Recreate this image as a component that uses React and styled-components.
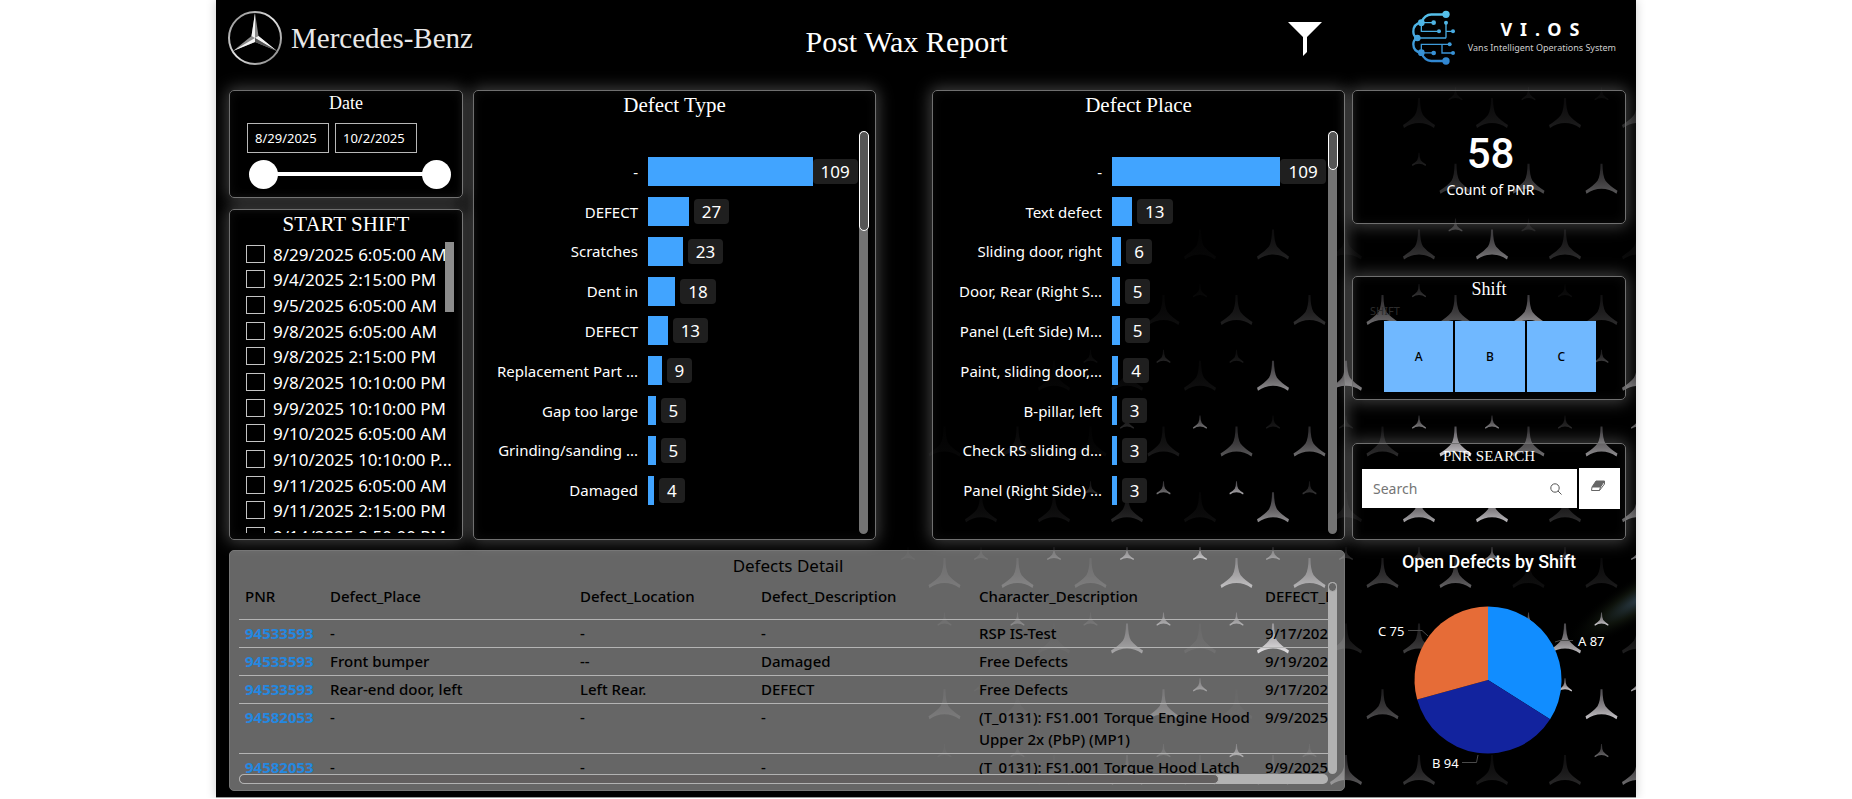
import React, { useState } from "react";
import styled, { createGlobalStyle } from "styled-components";

const GlobalStyle = createGlobalStyle`
  :root {
    --sans: "Noto Sans", "Open Sans", sans-serif;
    --serif: "Liberation Serif", "Times New Roman", serif;
    --din: Roboto, "Noto Sans", sans-serif;
    --color-bar: #41a4ff;
    --color-line: #707070;
  }
  * {
    box-sizing: border-box;
  }
  body {
    margin: 0;
    background-color: #fff;
    font-family: var(--sans);
    color: #fff;
  }
  button,
  input {
    font-family: inherit;
  }
`;

const Board = styled.main`
  position: relative;
  isolation: isolate;
  width: 100%;
  max-width: 1420px;
  margin: 0 auto;
  padding: 0 10px 6px 13px;
  background-color: #000;
  border-bottom: 1px solid #999;
  box-shadow: 0 0 10px rgba(0, 0, 0, 0.2);
`;

const Backdrop = styled.svg`
  position: absolute;
  inset: 0;
  z-index: -1;
  width: 100%;
  height: 100%;
`;

const Header = styled.header`
  height: 90px;
  padding-bottom: 10px;
  margin-left: -2px;
  display: grid;
  grid-template-columns: 1fr auto 1fr;
  align-items: center;
`;

const Brand = styled.div`
  display: flex;
  align-items: center;
  gap: 8px;
  padding-bottom: 4px;
  font-family: var(--serif);
  font-size: 29px;
  color: #e8e8e8;
`;

const PageTitle = styled.h1`
  margin: 0;
  padding: 4px 40px 0 0;
  font-family: var(--serif);
  font-size: 30px;
  font-weight: 400;
`;

const HeaderTools = styled.div`
  display: flex;
  align-items: center;
  justify-content: flex-end;
  gap: 88px;
  padding: 0 10px 6px 0;
`;

const FilterButton = styled.button`
  display: flex;
  padding: 4px 0 0;
  border: none;
  background: none;
  cursor: pointer;
`;

const Product = styled.div`
  display: flex;
  align-items: center;
  gap: 12px;
`;

const ProductName = styled.div`
  display: flex;
  flex-direction: column;
  align-items: center;
  strong {
    font-size: 18px;
    line-height: 22px;
    letter-spacing: 8px;
    margin-left: 4px;
  }
  span {
    font-size: 9px;
    line-height: 16px;
    white-space: nowrap;
    color: #ccc;
  }
`;

const Content = styled.div`
  display: grid;
  grid-template-columns: minmax(0, 1116fr) minmax(0, 274fr);
  gap: 7px;
`;

const MainArea = styled.div`
  display: flex;
  flex-direction: column;
  gap: 10px;
`;

const TopRow = styled.div`
  height: 450px;
  display: grid;
  grid-template-columns: minmax(0, 234fr) minmax(0, 449fr) minmax(0, 413fr);
  gap: 10px;
`;

const SideColumn = styled.div`
  display: flex;
  flex-direction: column;
  gap: 11px;
`;

const ChartCell = styled.div`
  display: flex;
  padding-right: ${(props) => (props.$spaced ? "46px" : "0")};
`;

const Card = styled.section`
  display: flex;
  flex-direction: column;
  width: 100%;
  height: ${(props) => props.$height || "auto"};
  flex: ${(props) => (props.$height ? "none" : "1")};
  min-height: 0;
  border: 1px solid var(--color-line);
  border-radius: 5px;
  box-shadow: 0 0 16px 2px rgba(255, 255, 255, 0.26), inset 0 0 12px rgba(255, 255, 255, 0.05);
`;

const CardTitle = styled.h2`
  margin: 0;
  flex: none;
  text-align: center;
  font-family: var(--serif);
  font-size: ${(props) => props.$size || "18px"};
  line-height: ${(props) => props.$line || "24px"};
  font-weight: 400;
`;

const DateFields = styled.div`
  display: flex;
  gap: 6px;
  padding: 8px 17px 0;
`;

const DateInput = styled.input`
  width: 82px;
  height: 30px;
  padding: 0 7px;
  border: 1px solid #b8b8b8;
  background: transparent;
  color: #fff;
  font-size: 13px;
`;

const RangeSlider = styled.div`
  position: relative;
  height: 30px;
  margin: 6px 11px 0 19px;
  ::before {
    content: "";
    position: absolute;
    inset: 13px 14px;
    background-color: #fff;
  }
`;

const RangeThumb = styled.input`
  position: absolute;
  inset: 0;
  width: 100%;
  height: 30px;
  margin: 0;
  appearance: none;
  background: transparent;
  pointer-events: none;
  &::-webkit-slider-thumb {
    appearance: none;
    width: 29px;
    height: 29px;
    border-radius: 50%;
    background: #fff;
    pointer-events: auto;
  }
`;

const CheckViewport = styled.div`
  position: relative;
  height: 291px;
  margin: 4px 8px 0 16px;
  overflow: hidden;
`;

const CheckList = styled.ul`
  height: 308px;
  margin: 0;
  padding: 0;
  list-style: none;
  display: grid;
  grid-auto-rows: 1fr;
`;

const CheckRow = styled.label`
  display: flex;
  align-items: center;
  gap: 8px;
  height: 100%;
  font-size: 17px;
  line-height: 24px;
  white-space: nowrap;
`;

const CheckBox = styled.input`
  appearance: none;
  flex: none;
  width: 19px;
  height: 18px;
  margin: 0 0 2px;
  border: 1px solid #c4c4c4;
  &:checked {
    background-color: var(--color-bar);
  }
`;

const CheckScroll = styled.div`
  position: absolute;
  top: 0;
  right: 0;
  width: 9px;
  height: 70px;
  background-color: #8c8c8c;
`;

const ChartBody = styled.div`
  display: flex;
  flex: 1;
  padding: 12px 7px 5px 0;
  min-height: 0;
`;

const ChartRows = styled.div`
  flex: 1;
  height: 358px;
  margin-top: 21px;
  display: grid;
  grid-auto-rows: 1fr;
`;

const ChartRow = styled.div`
  display: grid;
  grid-template-columns: ${(props) => props.$label} 1fr;
  gap: 10px;
  align-items: center;
`;

const ChartLabel = styled.span`
  text-align: right;
  font-size: 15px;
  line-height: 22px;
  white-space: nowrap;
`;

const Plot = styled.div`
  display: flex;
  align-items: center;
`;

const Bar = styled.div`
  flex: none;
  height: 29px;
  background-color: var(--color-bar);
`;

const BarValue = styled.span`
  margin-left: ${(props) => (props.$tight ? "0" : "5px")};
  padding: 0 8px;
  border-radius: 4px;
  background-color: #1f1f1f;
  font-size: 17px;
  line-height: 25px;
`;

const ChartScroll = styled.div`
  width: 9px;
  border-radius: 5px;
  background-color: #737373;
  div {
    width: 10px;
    height: ${(props) => props.$thumb};
    border: 1px solid #fff;
    border-radius: 5px;
    background-color: #555;
  }
`;

const DetailPanel = styled.section`
  height: 241px;
  padding: 3px 7px 6px 9px;
  border-radius: 5px;
  border: 1px solid #777;
  background-color: rgba(255, 255, 255, 0.4);
  color: #000;
  h2 {
    margin: 0;
    text-align: center;
    font-size: 17px;
    line-height: 24px;
    font-weight: 400;
  }
`;

const TableArea = styled.div`
  display: grid;
  grid-template-columns: minmax(0, 1fr) 9px;
  grid-template-rows: 196px 10px;
`;

const TableViewport = styled.div`
  overflow: hidden;
`;

const DetailTable = styled.table`
  width: 1160px;
  table-layout: fixed;
  border-collapse: collapse;
  font-size: 15px;
  line-height: 22px;
  font-weight: 500;
  th {
    height: 41px;
    padding: 7px 0 11px 6px;
    text-align: left;
    font-weight: 500;
    vertical-align: top;
  }
  td {
    padding: 2px 0 3px 6px;
    vertical-align: top;
  }
  tr {
    border-bottom: 1px solid #b4b4b4;
  }
  a {
    color: #2488e0;
    font-weight: 700;
    text-decoration: none;
  }
`;

const VerticalTrack = styled.div`
  margin-top: 4px;
  border-radius: 5px;
  background-color: #b2b2b2;
  div {
    height: 10px;
    border: 1px solid #b2b2b2;
    border-radius: 5px;
    background-color: #666;
  }
`;

const HorizontalTrack = styled.div`
  border-radius: 5px;
  background-color: #b2b2b2;
  div {
    width: 90%;
    height: 10px;
    border: 1px solid #b2b2b2;
    border-radius: 5px;
    background-color: #625f5f;
  }
`;

const RightColumn = styled.aside`
  display: flex;
  flex-direction: column;
`;

const Spacer = styled.div`
  height: ${(props) => props.$size};
`;

const CountValue = styled.div`
  padding: 38px 0 0 3px;
  text-align: center;
  font-family: var(--din);
  font-size: 42px;
  line-height: 50px;
  font-weight: 500;
`;

const CountLabel = styled.div`
  padding-left: 3px;
  text-align: center;
  font-size: 14px;
  line-height: 22px;
`;

const ShiftCaption = styled.div`
  padding-left: 17px;
  font-size: 11px;
  line-height: 20px;
  color: #2c2c2c;
`;

const ShiftButtons = styled.div`
  display: grid;
  grid-template-columns: repeat(3, 1fr);
  gap: 2px;
  padding: 0 29px 0 31px;
`;

const ShiftButton = styled.button`
  height: 71px;
  padding: 0;
  border: none;
  background-color: #70b8ff;
  color: #000;
  font-size: 12px;
  font-weight: 500;
`;

const SearchRow = styled.form`
  display: flex;
  align-items: center;
  gap: 2px;
  padding: 0 5px 0 9px;
`;

const SearchField = styled.label`
  flex: 1;
  min-width: 0;
  display: flex;
  align-items: center;
  height: 39px;
  padding: 0 15px 0 11px;
  background-color: #fff;
`;

const SearchInput = styled.input`
  flex: 1;
  min-width: 0;
  padding: 0;
  border: none;
  outline: none;
  font-size: 14px;
  ::placeholder {
    color: #757575;
  }
`;

const ClearButton = styled.button`
  flex: none;
  display: flex;
  align-items: center;
  justify-content: center;
  width: 41px;
  height: 41px;
  padding: 0 4px 6px 0;
  border: none;
  background-color: #fff;
`;

const PieTitle = styled.h2`
  margin: 0;
  text-align: center;
  font-family: var(--din);
  font-size: 18px;
  line-height: 24px;
  font-weight: 500;
`;

const PieSvg = styled.svg`
  display: block;
  width: 100%;
  height: 214px;
  font-size: 13px;
  text {
    fill: #fff;
  }
`;

// opacity of every star, row by row; odd rows are shifted by half a column
const bigStars = [
  [0, 0, 0, 0, 0, 0, 0, 0.1, 0.11, 0.13, 0.2],
  [0, 0, 0, 0, 0, 0, 0, 0.25, 0.35, 0.4],
  [0, 0, 0, 0, 0.03, 0.15, 0.04, 0.25, 0.55, 0.2, 0.05],
  [0, 0, 0, 0.06, 0.14, 0.22, 0.5, 0.4, 0.7, 0.2],
  [0, 0, 0.03, 0.05, 0.07, 0.65, 0.6, 0.2, 0.2, 0.2, 0.5],
  [0.03, 0.08, 0.03, 0.12, 0.4, 0.5, 0.2, 0.95, 0.5, 0.65],
  [0, 0.07, 0.08, 0.18, 0.06, 0.65, 0.08, 0.75, 0.85, 0.2, 0.5],
  [0.16, 0.24, 0.18, 0, 0.7, 0.6, 0.3, 0.45, 0.07, 0.12],
  [0, 0, 0.04, 0.5, 0.08, 0.95, 0.14, 0.3, 0, 0.85, 0.14],
  [0.16, 0.05, 0, 0.35, 0.05, 0, 0.35, 0, 0, 0.9],
  [0, 0, 0.05, 0.22, 0.12, 0.2, 0.4, 0.25, 0.12, 0.18, 0.5],
];

const smallStars = [
  [0, 0, 0, 0, 0, 0, 0, 0.06, 0.08, 0.06],
  [0, 0, 0, 0, 0, 0, 0, 0.15],
  [0, 0, 0, 0, 0, 0, 0, 0.3, 0.12],
  [0, 0, 0, 0, 0.04, 0, 0, 0.25, 0, 0.06],
  [0, 0, 0.06, 0.18, 0.12, 0, 0, 0, 0, 0.3],
  [0, 0, 0, 0.2, 0.55, 0.12, 0.1, 0.6, 0.6, 0.2, 0.5],
  [0, 0, 0.2, 0.55, 0.8, 0.25],
  [0.05, 0.12, 0.3, 0.6, 0.8, 0.5, 0.2, 0.25, 0.6, 0.25, 0.6],
  [0.1, 0.3, 0.14, 0.6, 0.6, 0, 0, 0, 0.7, 0.95],
  [0, 0.05, 0, 0, 0.5, 0, 0, 0, 0, 1, 0.8],
  [0.06, 0.1, 0, 0.2, 0.6, 0.14, 0, 0, 0, 0.5],
];

const starShape =
  "M-1 0H1Q1 12 4 17Q8 22 16 27L15 30Q8 25 0 25Q-8 25 -15 30L-16 27Q-8 22 -4 17Q-1 12 -1 0Z";

const StarField = () => (
  <Backdrop viewBox="0 0 1420 798" preserveAspectRatio="xMaxYMin slice" aria-hidden="true">
    <defs>
      <linearGradient id="starFill" x1="0" y1="0" x2="0" y2="1">
        <stop offset="0" stopColor="#8c8890" stopOpacity="0.6" />
        <stop offset="0.6" stopColor="#9c989c" />
        <stop offset="1" stopColor="#dcdade" />
      </linearGradient>
      <radialGradient id="flare">
        <stop offset="0" stopColor="#2c3d4a" />
        <stop offset="0.5" stopColor="#12180f" stopOpacity="0.8" />
        <stop offset="1" stopColor="#000" stopOpacity="0" />
      </radialGradient>
    </defs>
    <ellipse cx="1425" cy="598" rx="90" ry="22" fill="url(#flare)" transform="rotate(-32 1425 598)" />
    {bigStars.map((row, r) =>
      row.map((opacity, c) =>
        opacity ? (
          <path
            key={`b${r}-${c}`}
            d={starShape}
            fill="url(#starFill)"
            opacity={opacity}
            transform={`translate(${692 + c * 73 + (r % 2 ? 36.5 : 0)} ${98 + r * 65.7})`}
          />
        ) : null
      )
    )}
    {smallStars.map((row, r) =>
      row.map((opacity, c) =>
        opacity ? (
          <path
            key={`s${r}-${c}`}
            d={starShape}
            fill="url(#starFill)"
            opacity={opacity}
            transform={`translate(${692 + c * 73 + (r % 2 ? 0 : 36.5)} ${87 + r * 65.7}) scale(0.44)`}
          />
        ) : null
      )
    )}
  </Backdrop>
);

const StarLogo = () => (
  <svg width="56" height="56" viewBox="0 0 56 56" aria-hidden="true">
    <defs>
      <linearGradient id="ring" x1="0" y1="0" x2="1" y2="1">
        <stop offset="0" stopColor="#888" />
        <stop offset="0.5" stopColor="#e4e4e4" />
        <stop offset="1" stopColor="#777" />
      </linearGradient>
    </defs>
    <circle cx="28" cy="28" r="26" fill="none" stroke="url(#ring)" strokeWidth="2" />
    <path d="M28 3L31.5 26L50 41L28 32L6 41L24.5 26Z" fill="#8a8a8a" />
    <path d="M28 3V28L24.5 26ZM50 41L28 28L31.5 26ZM6 41L28 28V32Z" fill="#f4f4f4" />
    <path d="M28 28L50 41L28 32Z" fill="#555" />
  </svg>
);

const CircuitLogo = () => (
  <svg width="46" height="56" viewBox="452 24 138 168" aria-hidden="true">
    <defs>
      <linearGradient id="circuit" gradientUnits="userSpaceOnUse" x1="0" y1="30" x2="0" y2="190">
        <stop offset="0" stopColor="#58c4ec" />
        <stop offset="1" stopColor="#2f84d0" />
      </linearGradient>
    </defs>
    <g fill="none" stroke="url(#circuit)" strokeWidth="7">
      <path d="M560 40.5H516Q496 41 486 64Q462 68 462 92Q462 106 474 111Q462 116 462 130Q462 152 486 156Q496 179 516 180H560" />
      <path
        strokeWidth="4"
        d="M486 65H522M486 65V91H538M560 66V110.5M474 111H560.5M560 91H580M486 155V130H570M486 155.5H522M548 130V156H580"
      />
    </g>
    <g fill="url(#circuit)">
      <circle cx="560" cy="40" r="11" />
      <circle cx="560" cy="180" r="11" />
      <circle cx="486" cy="65" r="10" />
      <circle cx="486" cy="155" r="10" />
      <circle cx="474" cy="111" r="10" />
      <circle cx="523" cy="65" r="7" />
      <circle cx="539" cy="91" r="6" />
      <circle cx="560" cy="65" r="6" />
      <circle cx="581" cy="91" r="6" />
      <circle cx="571" cy="130" r="6" />
      <circle cx="523" cy="156" r="7" />
      <circle cx="581" cy="156" r="6" />
    </g>
  </svg>
);

const shiftStarts = [
  "8/29/2025 6:05:00 AM",
  "9/4/2025 2:15:00 PM",
  "9/5/2025 6:05:00 AM",
  "9/8/2025 6:05:00 AM",
  "9/8/2025 2:15:00 PM",
  "9/8/2025 10:10:00 PM",
  "9/9/2025 10:10:00 PM",
  "9/10/2025 6:05:00 AM",
  "9/10/2025 10:10:00 P...",
  "9/11/2025 6:05:00 AM",
  "9/11/2025 2:15:00 PM",
  "9/14/2025 9:50:00 PM",
];

const defectTypes = [
  ["-", 109],
  ["DEFECT", 27],
  ["Scratches", 23],
  ["Dent in", 18],
  ["DEFECT", 13],
  ["Replacement Part ...", 9],
  ["Gap too large", 5],
  ["Grinding/sanding ...", 5],
  ["Damaged", 4],
];

const defectPlaces = [
  ["-", 109],
  ["Text defect", 13],
  ["Sliding door, right", 6],
  ["Door, Rear (Right S...", 5],
  ["Panel (Left Side) M...", 5],
  ["Paint, sliding door,...", 4],
  ["B-pillar, left", 3],
  ["Check RS sliding d...", 3],
  ["Panel (Right Side) ...", 3],
];

const details = [
  ["94533593", "-", "-", "-", "RSP IS-Test", "9/17/2025"],
  ["94533593", "Front bumper", "--", "Damaged", "Free Defects", "9/19/2025"],
  ["94533593", "Rear-end door, left", "Left Rear.", "DEFECT", "Free Defects", "9/17/2025"],
  ["94582053", "-", "-", "-", "(T_0131): FS1.001 Torque Engine Hood Upper 2x (PbP) (MP1)", "9/9/2025"],
  ["94582053", "-", "-", "-", "(T_0131): FS1.001 Torque Hood Latch", "9/9/2025"],
];

const columns = ["PNR", "Defect_Place", "Defect_Location", "Defect_Description", "Character_Description", "DEFECT_DATE"];
const columnWidths = [85, 250, 181, 218, 286, 140];

const BarChart = ({ title, data, label, thumb }) => (
  <Card>
    <CardTitle $size="21px" $line="28px">
      {title}
    </CardTitle>
    <ChartBody>
      <ChartRows>
        {data.map(([name, value], index) => (
          <ChartRow key={index} $label={label}>
            <ChartLabel>{name}</ChartLabel>
            <Plot>
              <Bar style={{ width: `${(value / 109) * 78}%` }} />
              <BarValue $tight={value > 100}>{value}</BarValue>
            </Plot>
          </ChartRow>
        ))}
      </ChartRows>
      <ChartScroll $thumb={thumb}>
        <div />
      </ChartScroll>
    </ChartBody>
  </Card>
);

const PieChart = () => {
  const cx = 136;
  const cy = 106;
  const r = 73.5;
  const slices = [
    { value: 87, color: "#118dff" },
    { value: 94, color: "#12239e" },
    { value: 75, color: "#e66c37" },
  ];
  const total = slices.reduce((sum, s) => sum + s.value, 0);
  let angle = 0;
  const point = (a) => `${cx + r * Math.sin(a)} ${cy - r * Math.cos(a)}`;

  return (
    <PieSvg viewBox="0 0 274 214" role="img" aria-label="Open Defects by Shift">
      {slices.map((s) => {
        const start = angle;
        angle += (s.value / total) * Math.PI * 2;
        return <path key={s.color} d={`M${cx} ${cy}L${point(start)}A${r} ${r} 0 0 1 ${point(angle)}Z`} fill={s.color} />;
      })}
      <g fill="none" stroke="#4a4a4a">
        <path d="M56 56.5H70L76 62" />
        <path d="M203 68L208 66.5H221" />
        <path d="M110 188.5H124.5L126 181" />
      </g>
      <text x="26" y="62">C 75</text>
      <text x="226" y="72">A 87</text>
      <text x="80" y="194">B 94</text>
    </PieSvg>
  );
};

const App = () => {
  const [dates, setDates] = useState({ from: "8/29/2025", to: "10/2/2025" });
  const [range, setRange] = useState({ min: 0, max: 100 });
  const [search, setSearch] = useState("");

  return (
    <>
      <GlobalStyle />
      <Board>
        <StarField />
        <Header>
          <Brand>
            <StarLogo />
            Mercedes-Benz
          </Brand>
          <PageTitle>Post Wax Report</PageTitle>
          <HeaderTools>
            <FilterButton type="button" aria-label="Filter">
              <svg width="34" height="34" viewBox="0 0 34 34" fill="#fff">
                <path d="M0 0H34L19 15V30L15 34V15Z" />
              </svg>
            </FilterButton>
            <Product>
              <CircuitLogo />
              <ProductName>
                <strong>VI.OS</strong>
                <span>Vans Intelligent Operations System</span>
              </ProductName>
            </Product>
          </HeaderTools>
        </Header>

        <Content>
          <MainArea>
            <TopRow>
              <SideColumn>
                <Card $height="108px">
                  <CardTitle>Date</CardTitle>
                  <DateFields>
                    <DateInput
                      aria-label="Start date"
                      value={dates.from}
                      onChange={(e) => setDates({ ...dates, from: e.target.value })}
                    />
                    <DateInput
                      aria-label="End date"
                      value={dates.to}
                      onChange={(e) => setDates({ ...dates, to: e.target.value })}
                    />
                  </DateFields>
                  <RangeSlider>
                    <RangeThumb
                      type="range"
                      aria-label="Range start"
                      value={range.min}
                      onChange={(e) => setRange({ ...range, min: e.target.value })}
                    />
                    <RangeThumb
                      type="range"
                      aria-label="Range end"
                      value={range.max}
                      onChange={(e) => setRange({ ...range, max: e.target.value })}
                    />
                  </RangeSlider>
                </Card>
                <Card>
                  <CardTitle $size="21px" $line="28px">
                    START SHIFT
                  </CardTitle>
                  <CheckViewport>
                    <CheckList>
                      {shiftStarts.map((start) => (
                        <li key={start}>
                          <CheckRow>
                            <CheckBox type="checkbox" />
                            {start}
                          </CheckRow>
                        </li>
                      ))}
                    </CheckList>
                    <CheckScroll />
                  </CheckViewport>
                </Card>
              </SideColumn>
              <ChartCell $spaced>
                <BarChart title="Defect Type" data={defectTypes} label="164px" thumb="100px" />
              </ChartCell>
              <ChartCell>
                <BarChart title="Defect Place" data={defectPlaces} label="169px" thumb="39px" />
              </ChartCell>
            </TopRow>

            <DetailPanel>
              <h2>Defects Detail</h2>
              <TableArea>
                <TableViewport>
                  <DetailTable>
                    <colgroup>
                      {columnWidths.map((width, index) => (
                        <col key={index} width={width} />
                      ))}
                    </colgroup>
                    <thead>
                      <tr>
                        {columns.map((name) => (
                          <th key={name}>{name}</th>
                        ))}
                      </tr>
                    </thead>
                    <tbody>
                      {details.map(([pnr, ...cells], row) => (
                        <tr key={row}>
                          <td>
                            <a href={`#${pnr}`}>{pnr}</a>
                          </td>
                          {cells.map((cell, index) => (
                            <td key={index}>{cell}</td>
                          ))}
                        </tr>
                      ))}
                    </tbody>
                  </DetailTable>
                </TableViewport>
                <VerticalTrack>
                  <div />
                </VerticalTrack>
                <HorizontalTrack>
                  <div />
                </HorizontalTrack>
              </TableArea>
            </DetailPanel>
          </MainArea>

          <RightColumn>
            <Card $height="134px">
              <CountValue>58</CountValue>
              <CountLabel>Count of PNR</CountLabel>
            </Card>
            <Spacer $size="52px" />
            <Card $height="124px">
              <CardTitle>Shift</CardTitle>
              <ShiftCaption>SHIFT</ShiftCaption>
              <ShiftButtons>
                <ShiftButton type="button">A</ShiftButton>
                <ShiftButton type="button">B</ShiftButton>
                <ShiftButton type="button">C</ShiftButton>
              </ShiftButtons>
            </Card>
            <Spacer $size="43px" />
            <Card $height="97px">
              <CardTitle $size="15px">PNR SEARCH</CardTitle>
              <SearchRow onSubmit={(e) => e.preventDefault()}>
                <SearchField>
                  <SearchInput
                    aria-label="PNR search"
                    placeholder="Search"
                    value={search}
                    onChange={(e) => setSearch(e.target.value)}
                  />
                  <svg width="12" height="12" viewBox="0 0 12 12" fill="none" stroke="#555">
                    <circle cx="5" cy="5" r="4.2" />
                    <path d="M8 8L11.5 11.5" />
                  </svg>
                </SearchField>
                <ClearButton type="button" aria-label="Clear" onClick={() => setSearch("")}>
                  <svg width="14" height="12" viewBox="0 0 14 12" stroke="#666">
                    <path d="M5 1H13.5L9.5 7H1Z" fill="#666" />
                    <path d="M1 7L0.5 10.5H8.5L9.5 7M8.5 10.5L13.5 4V1" fill="none" />
                  </svg>
                </ClearButton>
              </SearchRow>
            </Card>
            <Spacer $size="10px" />
            <PieTitle>Open Defects by Shift</PieTitle>
            <PieChart />
          </RightColumn>
        </Content>
      </Board>
    </>
  );
};

export default App;
